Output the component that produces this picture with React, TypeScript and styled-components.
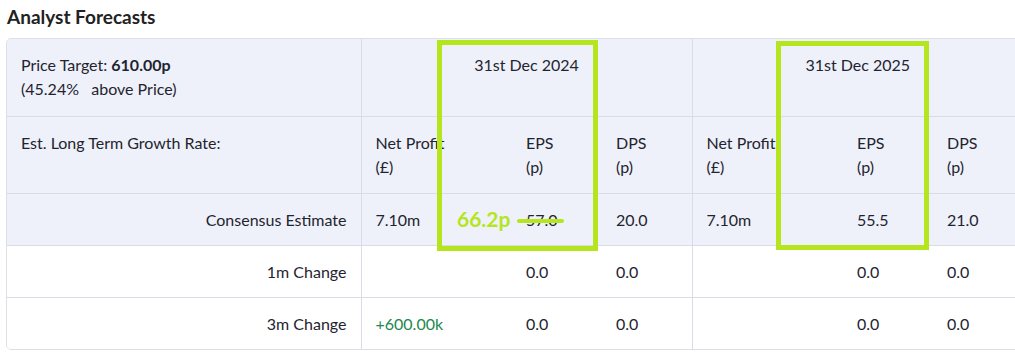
import React from "react";
import styled, { createGlobalStyle } from "styled-components";

const GlobalStyle = createGlobalStyle`
  html, body {
    margin: 0;
    padding: 0;
    background: #ffffff;
    overflow: hidden;
  }
  body {
    font-family: Lato, "Open Sans", Arial, sans-serif;
    color: #1f2430;
  }
`;

const Page = styled.div`
  padding: 5px 0 0 6px;
  width: 1100px;
`;

const Title = styled.h2`
  margin: 0 0 9px 1px;
  font-size: 19px;
  line-height: 24px;
  font-weight: 700;
  color: #222;
`;

const Card = styled.div`
  position: relative;
  width: 1016px;
  border: 1px solid #dcdfe6;
  border-radius: 5px;
  overflow: hidden;
`;

const Table = styled.table`
  width: 100%;
  table-layout: fixed;
  border-collapse: collapse;
  font-size: 16px;
  line-height: 24px;

  tr + tr > td {
    border-top: 1px solid #d9dce6;
  }
`;

const Row = styled.tr<{ $shade?: boolean; $tall?: boolean }>`
  background: ${(p) => (p.$shade ? "#eef1f9" : "#ffffff")};
  height: ${(p) => (p.$tall ? "77px" : "auto")};
`;

const Cell = styled.td<{ $align?: "left" | "right" | "center"; $divider?: boolean }>`
  padding: 14px 14px 13px 14px;
  vertical-align: top;
  text-align: ${(p) => p.$align ?? "left"};
  border-left: ${(p) => (p.$divider ? "1px solid #d9dce6" : "none")};
  white-space: nowrap;
`;

const Positive = styled.span`
  color: #23874f;
`;

const Highlight = styled.div<{ $left: number; $top: number; $w: number; $h: number }>`
  position: absolute;
  left: ${(p) => p.$left}px;
  top: ${(p) => p.$top}px;
  width: ${(p) => p.$w}px;
  height: ${(p) => p.$h}px;
  border: 5px solid #b5e61d;
  box-sizing: border-box;
  pointer-events: none;
`;

const NewValue = styled.span`
  position: absolute;
  left: 450px;
  top: 168px;
  font-size: 21px;
  line-height: 24px;
  font-weight: 700;
  color: #b5e61d;
`;

const StrikeLine = styled.div`
  position: absolute;
  left: 510px;
  top: 180px;
  width: 47px;
  height: 4px;
  border-radius: 2px;
  background: #b5e61d;
`;

const groups = [
  { date: "31st Dec 2024", eps: "57.0", dps: "20.0" },
  { date: "31st Dec 2025", eps: "55.5", dps: "21.0" },
];

export default function App() {
  return (
    <Page>
      <GlobalStyle />
      <Title>Analyst Forecasts</Title>
      <Card>
        <Table>
          <colgroup>
            <col style={{ width: 354 }} />
            <col style={{ width: 151 }} />
            <col style={{ width: 90 }} />
            <col style={{ width: 90 }} />
            <col style={{ width: 151 }} />
            <col style={{ width: 90 }} />
            <col style={{ width: 90 }} />
          </colgroup>
          <tbody>
            <Row $shade $tall>
              <Cell>
                Price Target: <b>610.00p</b>
                <br />
                (45.24%&nbsp;&nbsp; above Price)
              </Cell>
              {groups.map((g) => (
                <Cell key={g.date} colSpan={3} $align="center" $divider>
                  {g.date}
                </Cell>
              ))}
            </Row>
            <Row $shade $tall>
              <Cell>Est. Long Term Growth Rate:</Cell>
              {groups.map((g) => (
                <React.Fragment key={g.date}>
                  <Cell $divider>
                    Net Profit
                    <br />
                    (£)
                  </Cell>
                  <Cell>
                    EPS
                    <br />
                    (p)
                  </Cell>
                  <Cell>
                    DPS
                    <br />
                    (p)
                  </Cell>
                </React.Fragment>
              ))}
            </Row>
            <Row $shade>
              <Cell $align="right">Consensus Estimate</Cell>
              {groups.map((g) => (
                <React.Fragment key={g.date}>
                  <Cell $divider>7.10m</Cell>
                  <Cell>{g.eps}</Cell>
                  <Cell>{g.dps}</Cell>
                </React.Fragment>
              ))}
            </Row>
            <Row>
              <Cell $align="right">1m Change</Cell>
              {groups.map((g) => (
                <React.Fragment key={g.date}>
                  <Cell $divider />
                  <Cell>0.0</Cell>
                  <Cell>0.0</Cell>
                </React.Fragment>
              ))}
            </Row>
            <Row>
              <Cell $align="right">3m Change</Cell>
              {groups.map((g, i) => (
                <React.Fragment key={g.date}>
                  <Cell $divider>{i === 0 ? <Positive>+600.00k</Positive> : null}</Cell>
                  <Cell>0.0</Cell>
                  <Cell>0.0</Cell>
                </React.Fragment>
              ))}
            </Row>
          </tbody>
        </Table>
        <Highlight $left={430} $top={1} $w={161} $h={211} />
        <Highlight $left={769} $top={2} $w={153} $h={209} />
        <NewValue>66.2p</NewValue>
        <StrikeLine />
      </Card>
    </Page>
  );
}
